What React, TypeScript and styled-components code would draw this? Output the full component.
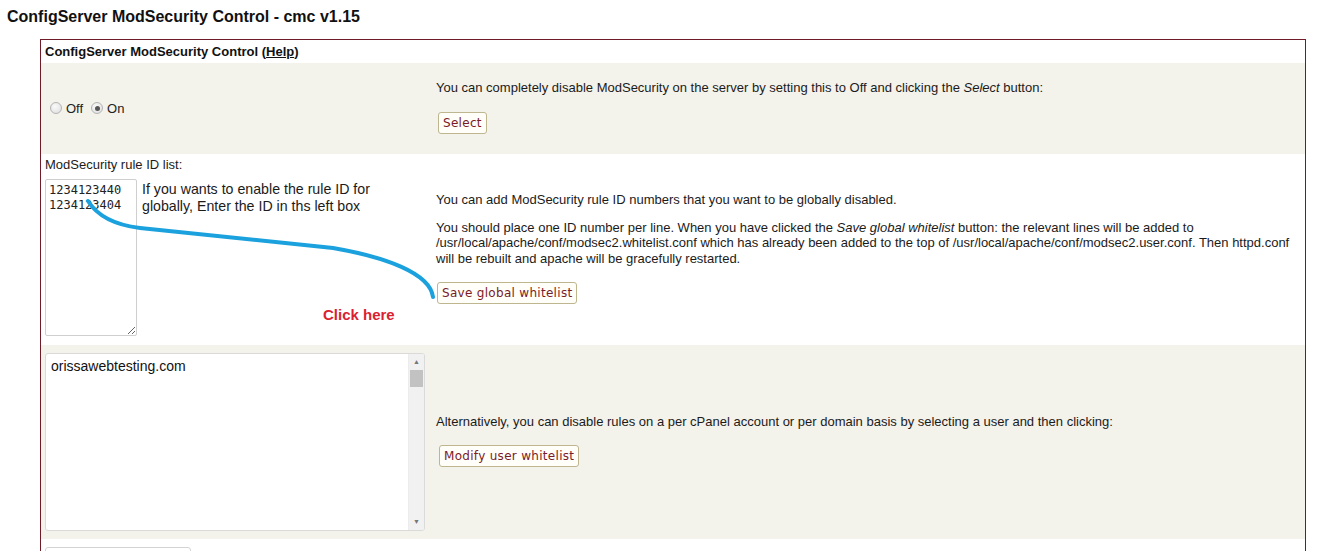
import React from "react"
import styled, { createGlobalStyle } from "styled-components"

const GlobalStyle = createGlobalStyle`
  body {
    margin: 0;
    background: #fff;
    font-family: "Liberation Sans", Arial, sans-serif;
    color: #1b1b1b;
  }
`

const Page = styled.div`
  padding-top: 7px;
`

const Title = styled.h1`
  margin: 0 0 13px 7px;
  font-size: 16px;
  line-height: 19px;
  font-weight: bold;
  color: #111;
`

const Panel = styled.div`
  margin-left: 40px;
  width: 1264px;
  border: 1px solid #701c28;
  border-bottom: none;
`

const PanelHeader = styled.div`
  padding: 5px 4px;
  font-size: 13px;
  line-height: 13px;
  font-weight: bold;
  color: #111;

  a {
    color: inherit;
  }
`

const Row = styled.div<{ $shaded?: boolean }>`
  position: relative;
  display: grid;
  grid-template-columns: 390px 1fr;
  background: ${p => (p.$shaded ? "#f3f2eb" : "#fff")};
`

const LeftCell = styled.div<{ $pad: string; $center?: boolean }>`
  padding: ${p => p.$pad};
  align-self: ${p => (p.$center ? "center" : "start")};
`

const RightCell = styled.div<{ $pad: string }>`
  align-self: center;
  padding: ${p => p.$pad};
  font-size: 13px;
  line-height: 15.5px;
`

const Para = styled.p<{ $last?: boolean }>`
  margin: 0 0 ${p => (p.$last ? "16px" : "12px")};
`

const Button = styled.button<{ $shift?: number }>`
  display: inline-block;
  height: 22px;
  margin: 0 0 0 ${p => p.$shift ?? 2}px;
  padding: 0 4px;
  font-family: "DejaVu Sans", Verdana, sans-serif;
  font-size: 12px;
  letter-spacing: 0.3px;
  color: #7a1b28;
  background: #fffef9;
  border: 1px solid #bdb68e;
  border-radius: 3px;
  cursor: pointer;
`

const RadioGroup = styled.div`
  display: flex;
  align-items: center;
  gap: 8px;
  padding-left: 5px;
  font-size: 13px;
`

const RadioLabel = styled.label`
  display: flex;
  align-items: center;
  gap: 4px;
  color: #222;
`

const Radio = styled.input`
  appearance: none;
  margin: 0;
  width: 12px;
  height: 12px;
  border-radius: 50%;
  border: 1px solid #b4b4b4;
  background: radial-gradient(circle at 40% 35%, #fafafa, #dcdcdc);
  display: grid;
  place-items: center;

  &:checked::after {
    content: "";
    width: 5px;
    height: 5px;
    border-radius: 50%;
    background: #555;
  }
`

const FieldLabel = styled.div`
  font-size: 13px;
  line-height: 14px;
  margin-bottom: 7px;
`

const IdRow = styled.div`
  display: flex;
  align-items: flex-start;
  gap: 5px;
`

const IdBox = styled.textarea`
  box-sizing: border-box;
  display: block;
  width: 92px;
  height: 157px;
  margin: 0;
  padding: 3px 3px;
  font-family: "DejaVu Sans Mono", "Liberation Mono", monospace;
  font-size: 12px;
  line-height: 15px;
  color: #222;
  border: 1px solid #cfcfcf;
  border-radius: 2px;
  resize: vertical;
  background: #fff;
`

const Hint = styled.div`
  margin-top: 2px;
  width: 240px;
  font-size: 14.2px;
  line-height: 17.5px;
  color: #1b1b1b;
`

const Overlay = styled.svg`
  position: absolute;
  left: 0;
  top: 0;
  width: 100%;
  height: 100%;
  overflow: visible;
  pointer-events: none;
`

const ClickHere = styled.div`
  position: absolute;
  left: 282px;
  top: 152px;
  font-size: 15px;
  line-height: 17px;
  font-weight: bold;
  color: #dc1f30;
`

const ListBox = styled.div`
  box-sizing: border-box;
  display: flex;
  width: 380px;
  height: 178px;
  background: #fff;
  border: 1px solid #dadada;
  border-radius: 3px;
  overflow: hidden;
`

const ListItems = styled.div`
  flex: 1;
  padding: 4px 5px;
  font-size: 14px;
  line-height: 16px;
  color: #111;
`

const ScrollTrack = styled.div`
  width: 15px;
  display: flex;
  flex-direction: column;
  background: #f1f1f1;
  border-left: 1px solid #ececec;
`

const ScrollArrow = styled.div`
  height: 16px;
  display: grid;
  place-items: center;
  font-size: 7px;
  color: #777;
`

const ScrollThumb = styled.div`
  height: 17px;
  margin: 0 1px;
  background: #c2c2c2;
`

const ScrollFill = styled.div`
  flex: 1;
`

const DropSelect = styled.div`
  box-sizing: border-box;
  width: 146px;
  height: 22px;
  border: 1px solid #d4d4d4;
  border-radius: 3px;
  background: #fff;
`

const App = () => {
  return (
    <>
      <GlobalStyle />
      <Page>
        <Title>ConfigServer ModSecurity Control - cmc v1.15</Title>
        <Panel>
          <PanelHeader>
            ConfigServer ModSecurity Control (<a href="#">Help</a>)
          </PanelHeader>

          <Row $shaded>
            <LeftCell $pad="0 4px" $center>
              <RadioGroup>
                <RadioLabel>
                  <Radio type="radio" name="mode" value="off" readOnly />
                  Off
                </RadioLabel>
                <RadioLabel>
                  <Radio type="radio" name="mode" value="on" defaultChecked />
                  On
                </RadioLabel>
              </RadioGroup>
            </LeftCell>
            <RightCell $pad="17px 5px 20px">
              <Para $last>
                You can completely disable ModSecurity on the server by setting this to Off and clicking the{" "}
                <i>Select</i> button:
              </Para>
              <Button>Select</Button>
            </RightCell>
          </Row>

          <Row>
            <LeftCell $pad="4px 4px 9px">
              <FieldLabel>ModSecurity rule ID list:</FieldLabel>
              <IdRow>
                <IdBox readOnly defaultValue={"1234123440\n1234123404"} />
                <Hint>If you wants to enable the rule ID for globally, Enter the ID in ths left box</Hint>
              </IdRow>
            </LeftCell>
            <RightCell $pad="0 5px 2px">
              <Para>You can add ModSecurity rule ID numbers that you want to be globally disabled.</Para>
              <Para $last>
                You should place one ID number per line. When you have clicked the <i>Save global whitelist</i>{" "}
                button: the relevant lines will be added to /usr/local/apache/conf/modsec2.whitelist.conf which has
                already been added to the top of /usr/local/apache/conf/modsec2.user.conf. Then httpd.conf will be
                rebuilt and apache will be gracefully restarted.
              </Para>
              <Button $shift={1}>Save global whitelist</Button>
            </RightCell>
            <Overlay>
              <path
                d="M47,47 C57,63 74,71 99,74 L292,94 C344,103 389,119 392,143"
                fill="none"
                stroke="#1ba1dd"
                strokeWidth="4"
                strokeLinecap="round"
              />
            </Overlay>
            <ClickHere>Click here</ClickHere>
          </Row>

          <Row $shaded>
            <LeftCell $pad="8px 4px 8px">
              <ListBox>
                <ListItems>orissawebtesting.com</ListItems>
                <ScrollTrack>
                  <ScrollArrow>▲</ScrollArrow>
                  <ScrollThumb />
                  <ScrollFill />
                  <ScrollArrow>▼</ScrollArrow>
                </ScrollTrack>
              </ListBox>
            </LeftCell>
            <RightCell $pad="0 5px 2px">
              <Para $last>
                Alternatively, you can disable rules on a per cPanel account or per domain basis by selecting a user
                and then clicking:
              </Para>
              <Button $shift={3}>Modify user whitelist</Button>
            </RightCell>
          </Row>

          <Row>
            <LeftCell $pad="8px 4px">
              <DropSelect />
            </LeftCell>
          </Row>
        </Panel>
      </Page>
    </>
  )
}

export default App
